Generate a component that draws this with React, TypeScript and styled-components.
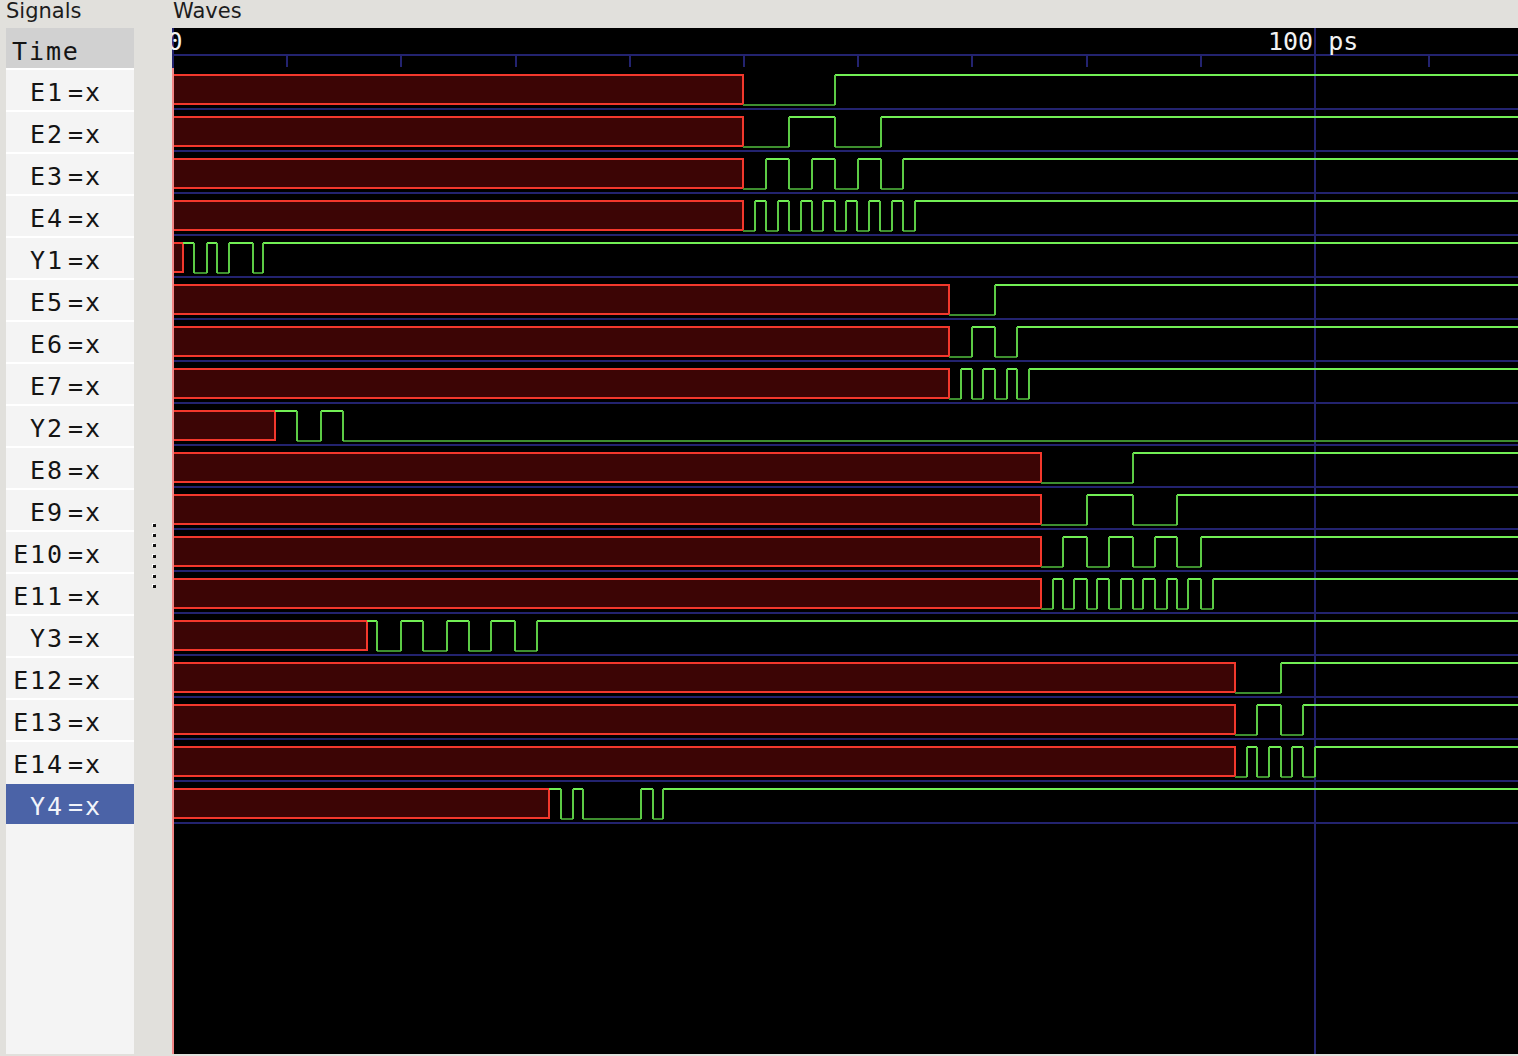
import React from 'react';
import styled, { createGlobalStyle } from 'styled-components';

const GlobalStyle = createGlobalStyle`
  html, body {
    margin: 0;
    padding: 0;
    background: #e1e0dc;
    overflow: hidden;
  }
`;

// geometry of the wave canvas, in page pixels
const WAVE_LEFT = 172;
const WAVE_TOP = 28;
const WAVE_W = 1346;
const WAVE_H = 1026;
const T0_X = 173;
const TICK_STEP = 114.2;
const ROW_PITCH = 42;
const HI_Y = 75;
const LO_Y = 105;
const X_BOTTOM = 104;
const SEP_Y = 109;

type Trace = {
  name: string;
  xEnd: number; // where the unknown (X) region stops
  start: 0 | 1; // level right after the X region
  edges: number[]; // x positions of every toggle after that
};

const traces: Trace[] = [
  { name: 'E1', xEnd: 743, start: 0, edges: [835] },
  { name: 'E2', xEnd: 743, start: 0, edges: [789, 835, 881] },
  { name: 'E3', xEnd: 743, start: 0, edges: [766, 789, 812, 835, 858, 881, 903] },
  { name: 'E4', xEnd: 743, start: 0, edges: [755, 766, 778, 789, 801, 812, 823, 835, 846, 857, 869, 880, 892, 903, 915] },
  { name: 'Y1', xEnd: 183, start: 1, edges: [194, 207, 217, 229, 253, 263] },
  { name: 'E5', xEnd: 949, start: 0, edges: [995] },
  { name: 'E6', xEnd: 949, start: 0, edges: [972, 995, 1017] },
  { name: 'E7', xEnd: 949, start: 0, edges: [961, 972, 983, 995, 1007, 1017, 1029] },
  { name: 'Y2', xEnd: 275, start: 1, edges: [297, 321, 343] },
  { name: 'E8', xEnd: 1041, start: 0, edges: [1133] },
  { name: 'E9', xEnd: 1041, start: 0, edges: [1087, 1133, 1177] },
  { name: 'E10', xEnd: 1041, start: 0, edges: [1063, 1087, 1109, 1133, 1155, 1177, 1201] },
  { name: 'E11', xEnd: 1041, start: 0, edges: [1053, 1063, 1074, 1087, 1097, 1109, 1121, 1133, 1143, 1155, 1167, 1177, 1188, 1201, 1213] },
  { name: 'Y3', xEnd: 367, start: 1, edges: [377, 401, 423, 447, 469, 491, 515, 537] },
  { name: 'E12', xEnd: 1235, start: 0, edges: [1281] },
  { name: 'E13', xEnd: 1235, start: 0, edges: [1257, 1281, 1303] },
  { name: 'E14', xEnd: 1235, start: 0, edges: [1247, 1257, 1269, 1281, 1292, 1303, 1315] },
  { name: 'Y4', xEnd: 549, start: 1, edges: [561, 573, 583, 641, 653, 663] },
];

const SELECTED = 'Y4';

const Window = styled.div`
  display: flex;
  width: 1518px;
  height: 1056px;
  background: #e1e0dc;
`;

const SignalsColumn = styled.div`
  width: 172px;
  flex-shrink: 0;
  display: flex;
  flex-direction: column;
`;

const WavesColumn = styled.div`
  flex: 1;
  display: flex;
  flex-direction: column;
  min-width: 0;
`;

const PaneTitle = styled.div<{ $indent: number }>`
  height: 28px;
  padding-left: ${(p) => p.$indent}px;
  font-family: 'DejaVu Sans', 'Liberation Sans', sans-serif;
  font-size: 21px;
  line-height: 22px;
  color: #1c1c1c;
  box-sizing: border-box;
`;

const SignalsBody = styled.div`
  flex: 1;
  display: flex;
  padding: 0 0 2px 6px;
`;

const SignalList = styled.div`
  width: 128px;
  background: #f4f4f4;
  display: flex;
  flex-direction: column;
  font-family: 'DejaVu Sans Mono', 'Liberation Mono', monospace;
  font-size: 25px;
  letter-spacing: 1.9px;
  color: #141414;
`;

const TimeRow = styled.div`
  height: 40px;
  background: #d1d1d1;
  display: flex;
  align-items: center;
  padding: 7px 0 0 6px;
  box-sizing: border-box;
`;

const SignalRow = styled.div<{ $selected: boolean }>`
  height: 42px;
  box-sizing: border-box;
  border-top: 2px solid ${(p) => (p.$selected ? '#f4f4f4' : '#ffffff')};
  background: ${(p) => (p.$selected ? '#4b63a7' : 'transparent')};
  color: ${(p) => (p.$selected ? '#f2f4fa' : 'inherit')};
  display: flex;
  align-items: center;
  padding-top: 4px;
`;

const SignalName = styled.span`
  width: 58px;
  text-align: right;
  white-space: pre;
`;

const SignalValue = styled.span`
  margin-left: 4px;
  white-space: pre;
`;

const Gutter = styled.div`
  flex: 1;
  display: flex;
  justify-content: center;
  align-items: center;
  padding: 30px 0 0 2px;
`;

const Grip = styled.div`
  display: flex;
  flex-direction: column;
  gap: 7.3px;
`;

const GripDot = styled.span`
  width: 3px;
  height: 3px;
  background: #111;
  box-shadow: -1px -1px 0 #fff;
`;

const WaveCanvas = styled.svg`
  display: block;
  width: ${WAVE_W}px;
  height: ${WAVE_H}px;
  background: #000;
`;

const RulerLabel = styled.text`
  font-family: 'DejaVu Sans Mono', 'Liberation Mono', monospace;
  font-size: 25px;
  fill: #f2f2f2;
`;

const GRID = '#23236f';
const HIGH = '#72ef55';
const LOW = '#3e8f2f';
const EDGE = '#5ccb45';
const XLINE = '#f3382c';
const XFILL = '#3c0505';

function tracePaths(t: Trace, k: number) {
  const dy = k * ROW_PITCH;
  const hi = HI_Y + dy;
  const lo = LO_Y + dy;
  const stops = [t.xEnd, ...t.edges, WAVE_LEFT + WAVE_W];
  let high = '';
  let low = '';
  let edges = '';
  let level = t.start;
  for (let i = 0; i < stops.length - 1; i++) {
    const a = stops[i];
    const b = stops[i + 1];
    if (level) high += `M${a} ${hi}H${b}`;
    else low += `M${a} ${lo}H${b}`;
    if (i < stops.length - 2) edges += `M${b} ${hi}V${lo}`;
    level = level ? 0 : 1;
  }
  return { high, low, edges };
}

const Waves: React.FC = () => {
  const ticks: number[] = [];
  for (let i = 1; i <= 11; i++) ticks.push(T0_X + TICK_STEP * i);
  const major = T0_X + TICK_STEP * 10;

  return (
    <WaveCanvas
      viewBox={`${WAVE_LEFT} ${WAVE_TOP} ${WAVE_W} ${WAVE_H}`}
      shapeRendering="crispEdges"
    >
      {/* ruler */}
      <line x1={WAVE_LEFT} y1={55} x2={WAVE_LEFT + WAVE_W} y2={55} stroke={GRID} strokeWidth={2} />
      {ticks.map((x, i) =>
        i === 9 ? null : (
          <line key={i} x1={Math.round(x)} y1={55} x2={Math.round(x)} y2={67} stroke={GRID} strokeWidth={2} />
        )
      )}
      <line x1={173} y1={WAVE_TOP} x2={173} y2={68} stroke={GRID} strokeWidth={2} />
      <RulerLabel x={167.5} y={50}>0</RulerLabel>
      <RulerLabel x={1268} y={50} xmlSpace="preserve">100 ps</RulerLabel>

      {/* row separators */}
      {traces.map((_, k) => (
        <line
          key={k}
          x1={WAVE_LEFT}
          y1={SEP_Y + k * ROW_PITCH}
          x2={WAVE_LEFT + WAVE_W}
          y2={SEP_Y + k * ROW_PITCH}
          stroke={GRID}
          strokeWidth={2}
        />
      ))}
      <line x1={Math.round(major)} y1={WAVE_TOP} x2={Math.round(major)} y2={WAVE_TOP + WAVE_H} stroke={GRID} strokeWidth={2} />

      {/* traces */}
      {traces.map((t, k) => {
        const dy = k * ROW_PITCH;
        const p = tracePaths(t, k);
        return (
          <g key={t.name}>
            <rect
              x={T0_X}
              y={HI_Y + dy}
              width={t.xEnd - T0_X}
              height={X_BOTTOM - HI_Y}
              fill={XFILL}
              stroke={XLINE}
              strokeWidth={2}
            />
            <path d={p.low} stroke={LOW} strokeWidth={2} fill="none" />
            <path d={p.high} stroke={HIGH} strokeWidth={2} fill="none" />
            <path d={p.edges} stroke={EDGE} strokeWidth={2} fill="none" />
          </g>
        );
      })}

      {/* time-zero marker */}
      <line x1={173} y1={68} x2={173} y2={WAVE_TOP + WAVE_H} stroke="#f08585" strokeWidth={2} />
    </WaveCanvas>
  );
};

export default function App() {
  return (
    <>
      <GlobalStyle />
      <Window>
        <SignalsColumn>
          <PaneTitle $indent={6}>Signals</PaneTitle>
          <SignalsBody>
            <SignalList>
              <TimeRow>Time</TimeRow>
              {traces.map((t) => (
                <SignalRow key={t.name} $selected={t.name === SELECTED}>
                  <SignalName>{t.name}</SignalName>
                  <SignalValue>=x</SignalValue>
                </SignalRow>
              ))}
            </SignalList>
            <Gutter>
              <Grip>
                {Array.from({ length: 7 }).map((_, i) => (
                  <GripDot key={i} />
                ))}
              </Grip>
            </Gutter>
          </SignalsBody>
        </SignalsColumn>
        <WavesColumn>
          <PaneTitle $indent={1}>Waves</PaneTitle>
          <Waves />
        </WavesColumn>
      </Window>
    </>
  );
}
